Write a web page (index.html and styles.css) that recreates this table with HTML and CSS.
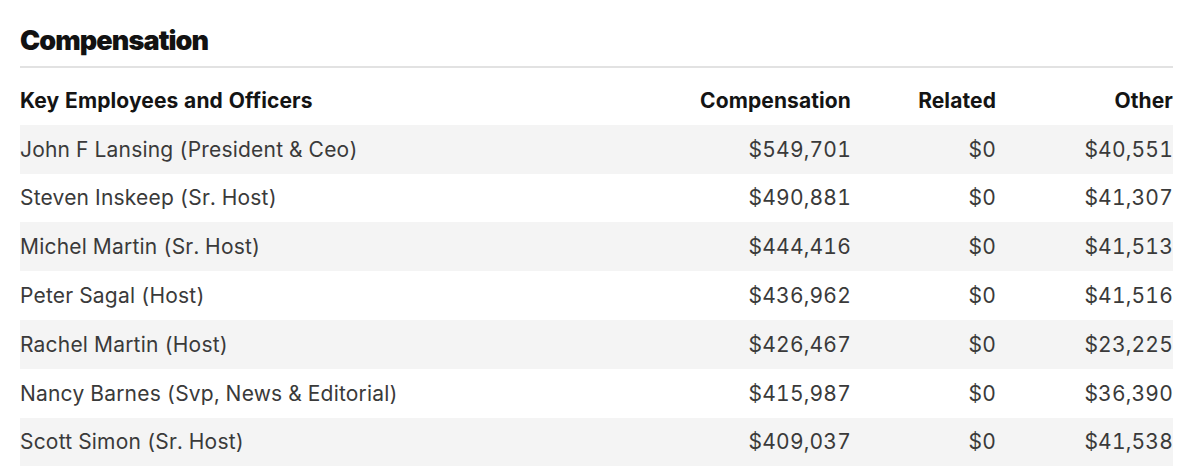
FILE: index.html
```html
<!DOCTYPE html>
<html lang="en">
<head>
<meta charset="utf-8">
<title>Compensation</title>
<link rel="stylesheet" href="styles.css">
</head>
<body>
<section class="comp">
  <h2 class="comp-title">Compensation</h2>
  <table class="comp-table">
    <colgroup>
      <col class="c-name">
      <col class="c-comp">
      <col class="c-rel">
      <col class="c-other">
    </colgroup>
    <thead>
      <tr>
        <th class="left">Key Employees and Officers</th>
        <th>Compensation</th>
        <th>Related</th>
        <th>Other</th>
      </tr>
    </thead>
    <tbody>
      <tr><td class="left">John F Lansing (President &amp; Ceo)</td><td>$549,701</td><td>$0</td><td>$40,551</td></tr>
      <tr><td class="left">Steven Inskeep (Sr. Host)</td><td>$490,881</td><td>$0</td><td>$41,307</td></tr>
      <tr><td class="left">Michel Martin (Sr. Host)</td><td>$444,416</td><td>$0</td><td>$41,513</td></tr>
      <tr><td class="left">Peter Sagal (Host)</td><td>$436,962</td><td>$0</td><td>$41,516</td></tr>
      <tr><td class="left">Rachel Martin (Host)</td><td>$426,467</td><td>$0</td><td>$23,225</td></tr>
      <tr><td class="left">Nancy Barnes (Svp, News &amp; Editorial)</td><td>$415,987</td><td>$0</td><td>$36,390</td></tr>
      <tr><td class="left">Scott Simon (Sr. Host)</td><td>$409,037</td><td>$0</td><td>$41,538</td></tr>
    </tbody>
  </table>
</section>
</body>
</html>
```
FILE: styles.css
```css
html, body {
  margin: 0;
  padding: 0;
  background: #ffffff;
}
body {
  font-family: Inter, "Noto Sans", "Liberation Sans", sans-serif;
  color: #333333;
}
.comp {
  padding: 25px 27px 0 20px;
}
.comp-title {
  margin: 0;
  font-size: 27px;
  line-height: 32px;
  font-weight: 900;
  color: #121212;
  letter-spacing: -0.9px;
  padding-bottom: 9px;
  border-bottom: 2px solid #e2e2e2;
}
.comp-table {
  width: 100%;
  border-collapse: collapse;
  margin-top: 8px;
  table-layout: fixed;
}
.c-comp { width: 300px; }
.c-rel { width: 145px; }
.c-other { width: 177px; }
.comp-table th,
.comp-table td {
  padding: 0;
  height: 48.8px;
  text-align: right;
  white-space: nowrap;
  font-size: 21px;
  letter-spacing: 0.2px;
  font-variant-numeric: tabular-nums;
}
.comp-table th {
  font-weight: 700;
  color: #141414;
  letter-spacing: 0.1px;
}
.comp-table td {
  font-weight: 400;
  color: #3a3a3a;
}
.comp-table .left {
  text-align: left;
}
.comp-table tbody tr:nth-child(odd) {
  background: #f4f4f4;
}
```
